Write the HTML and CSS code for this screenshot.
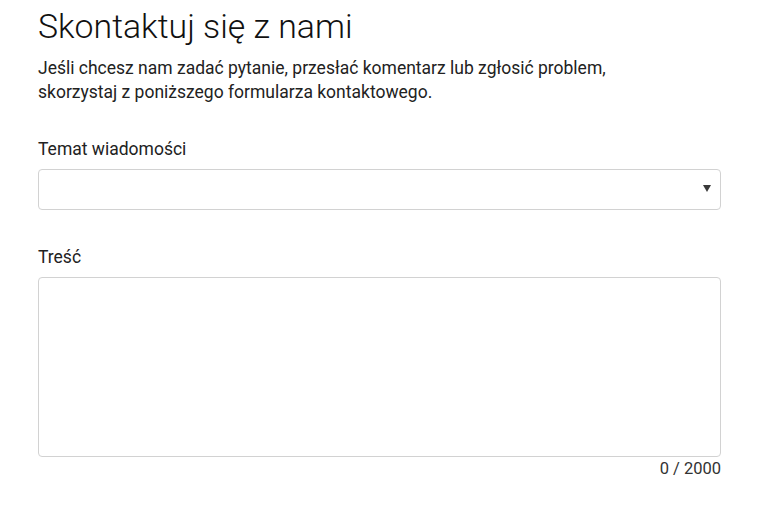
FILE: index.html
```html
<!DOCTYPE html>
<html lang="pl">
<head>
<meta charset="utf-8">
<link rel="stylesheet" href="styles.css">
</head>
<body>
<main class="page">
  <h1 class="title">Skontaktuj się z nami</h1>
  <p class="intro">Jeśli chcesz nam zadać pytanie, przesłać komentarz lub zgłosić problem,<br>skorzystaj z poniższego formularza kontaktowego.</p>
  <div class="field">
    <label class="label">Temat wiadomości</label>
    <div class="select">
      <svg class="arrow" width="8" height="7" viewBox="0 0 8 7"><path d="M0 0H8L4 7Z" fill="#3a3a3a"/></svg>
    </div>
  </div>
  <div class="field field-body">
    <label class="label">Treść</label>
    <div class="textarea"></div>
    <div class="counter">0 / 2000</div>
  </div>
</main>
</body>
</html>
```

FILE: styles.css
```css
html, body {
  margin: 0;
  padding: 0;
  background: #fff;
}
body {
  font-family: Roboto, "Liberation Sans", sans-serif;
  color: #222;
}
.page {
  width: 683px;
  padding: 7px 0 0 38px;
}
.title {
  margin: 0;
  font-size: 33.8px;
  font-weight: 300;
  line-height: 40px;
  color: #111;
}
.intro {
  margin: 9px 0 0;
  font-size: 17.5px;
  line-height: 24px;
  font-weight: 400;
  color: #222;
}
.field {
  margin-top: 33px;
}
.label {
  display: block;
  font-size: 17.5px;
  line-height: 24px;
  font-weight: 400;
  color: #222;
}
.select {
  box-sizing: border-box;
  margin-top: 8px;
  height: 41px;
  border: 1px solid #d2d2d2;
  border-radius: 4px;
  display: flex;
  align-items: center;
  justify-content: flex-end;
  padding-right: 9px;
}
.arrow {
  display: block;
  margin-top: -2px;
}
.field-body {
  margin-top: 35px;
}
.textarea {
  box-sizing: border-box;
  margin-top: 8px;
  height: 180px;
  border: 1px solid #d2d2d2;
  border-radius: 4px;
}
.counter {
  text-align: right;
  font-size: 16.5px;
  line-height: 24px;
  font-weight: 400;
  color: #333;
}
```
